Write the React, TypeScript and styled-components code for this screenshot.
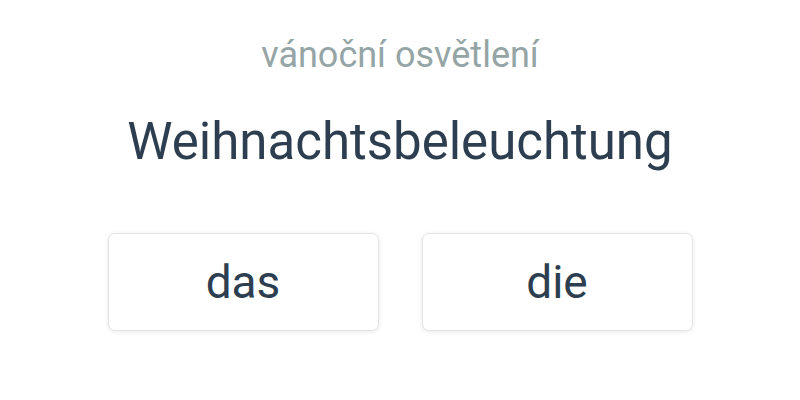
import styled, { createGlobalStyle } from "styled-components";

const GlobalStyle = createGlobalStyle`
  html, body {
    margin: 0;
    padding: 0;
    background: #fff;
  }
  body {
    font-family: Roboto, "Noto Sans", sans-serif;
  }
`;

const Card = styled.div`
  width: 800px;
  height: 400px;
  display: flex;
  flex-direction: column;
  align-items: center;
  padding-top: 33px;
  box-sizing: border-box;
`;

const Translation = styled.div`
  font-size: 36px;
  line-height: 44px;
  color: #95a5a6;
`;

const Word = styled.h1`
  margin: 35px 0 0;
  font-size: 51px;
  font-weight: 400;
  line-height: 60px;
  color: #2c3e50;
`;

const Choices = styled.div`
  display: flex;
  gap: 43px;
  margin-top: 61px;
`;

const ArticleButton = styled.button`
  width: 271px;
  height: 98px;
  padding: 0;
  background: #fff;
  border: 1px solid #e4e4e4;
  border-radius: 7px;
  box-shadow: 0 1px 5px rgba(0, 0, 0, 0.09);
  font-family: inherit;
  font-size: 46px;
  color: #2c3e50;
  cursor: pointer;
  transition: 0.2s ease;
  &:hover {
    box-shadow: 0 2px 8px rgba(0, 0, 0, 0.14);
  }
`;

const articles = ["das", "die"];

const App = () => {
  return (
    <>
      <GlobalStyle />
      <Card>
        <Translation>vánoční osvětlení</Translation>
        <Word>Weihnachtsbeleuchtung</Word>
        <Choices>
          {articles.map((a) => (
            <ArticleButton key={a}>{a}</ArticleButton>
          ))}
        </Choices>
      </Card>
    </>
  );
};

export default App;
